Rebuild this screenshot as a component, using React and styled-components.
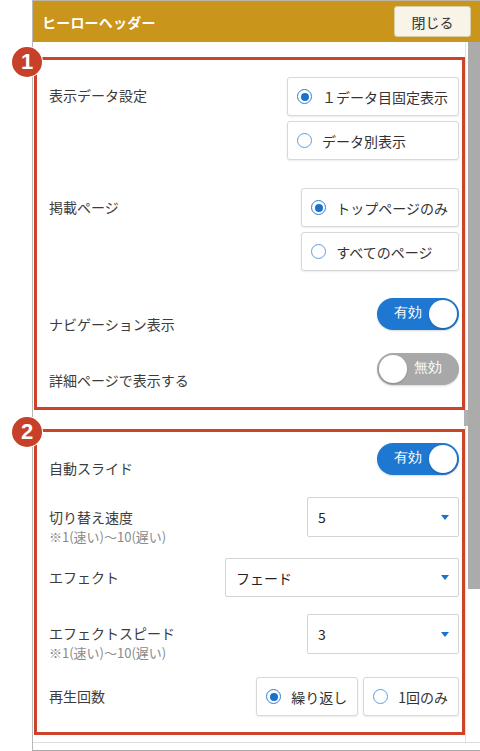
import React, { useState } from "react";
import styled, { createGlobalStyle } from "styled-components";

const GlobalStyle = createGlobalStyle`
  * { box-sizing: border-box; }
  html, body { margin: 0; padding: 0; background: #fff; }
  body {
    font-family: "Noto Sans CJK JP", "Noto Sans", sans-serif;
    color: #3a3a3a;
  }
`;

const Page = styled.div`
  width: 480px;
  height: 751px;
  display: flex;
  padding-left: 32px;
  overflow: hidden;
`;

const Panel = styled.div`
  flex: 1;
  display: flex;
  flex-direction: column;
  border-left: 1px solid #b8b8b8;
  border-bottom: 1px solid #a8a8a8;
`;

const Header = styled.div`
  height: 42px;
  flex-shrink: 0;
  display: flex;
  align-items: center;
  justify-content: space-between;
  padding: 0 9px 0 9px;
  background: #ca951b;
  border-top: 1px solid #bdb6a6;
`;

const Title = styled.div`
  color: #fff;
  font-size: 14px;
  font-weight: 700;
  letter-spacing: 0.2px;
`;

const CloseButton = styled.button`
  width: 77px;
  height: 31px;
  border: 1px solid #d9cfa8;
  border-radius: 3px;
  background: #f8f4e8;
  color: #333;
  font-family: inherit;
  font-size: 14px;
  cursor: pointer;
`;

const Body = styled.div`
  flex: 1;
  display: flex;
  min-height: 0;
`;

const Content = styled.div`
  flex: 1;
  display: flex;
  flex-direction: column;
  gap: 19px;
  padding: 15px 0 0 1px;
`;

const Scrollbar = styled.div`
  width: 15px;
  flex-shrink: 0;
  position: relative;
  border-left: 1px solid #e2e2e2;
  padding: 0 0 0 2px;

  &::before {
    content: "";
    position: absolute;
    left: -2px;
    top: 368px;
    width: 4px;
    height: 16px;
    background: #b0b0b0;
  }
`;

const Thumb = styled.div`
  height: 547px;
  background: #ababab;
`;

const Footer = styled.div`
  height: 8px;
  flex-shrink: 0;
  border-top: 1px solid #dedede;
`;

const Section = styled.div`
  position: relative;
  border: 3px solid #cc432a;
  padding: ${({ $pad }) => $pad};
  display: flex;
  flex-direction: column;
`;

const Badge = styled.div`
  position: absolute;
  left: -25px;
  top: ${({ $top }) => $top}px;
  width: 30px;
  height: 30px;
  border-radius: 50%;
  background: #c7402a;
  box-shadow: 0 0 0 1px #fff;
  color: #fff;
  font-family: "Liberation Sans", Arial, sans-serif;
  font-weight: 700;
  font-size: 22px;
  display: flex;
  align-items: center;
  justify-content: center;
`;

const Row = styled.div`
  display: flex;
  justify-content: space-between;
  align-items: flex-start;
  margin-top: ${({ $mt }) => $mt || 0}px;
`;

const Label = styled.div`
  padding-top: ${({ $pt }) => $pt}px;
  font-size: 14px;
  line-height: 20px;
  color: #3c3c3c;
`;

const Sub = styled.div`
  font-size: 13px;
  line-height: 20px;
  color: #8a8a8a;
`;

const OptionStack = styled.div`
  display: flex;
  flex-direction: ${({ $dir }) => $dir || "column"};
  gap: 5px;
`;

const Option = styled.label`
  height: 39px;
  display: flex;
  align-items: center;
  gap: 10px;
  padding: 0 10px 0 9px;
  border: 1px solid #d8d8d8;
  border-radius: 3px;
  box-shadow: 0 1px 2px rgba(0, 0, 0, 0.08);
  background: #fff;
  font-size: 14px;
  color: #333;
  cursor: pointer;
  white-space: nowrap;
`;

const Radio = styled.span`
  width: 15px;
  height: 15px;
  flex-shrink: 0;
  border-radius: 50%;
  border: 1.5px solid ${({ $on }) => ($on ? "#2c7fd6" : "#5c9ee2")};
  display: flex;
  align-items: center;
  justify-content: center;

  &::after {
    content: "";
    width: 8px;
    height: 8px;
    border-radius: 50%;
    background: ${({ $on }) => ($on ? "#1a72cf" : "transparent")};
  }
`;

const Toggle = styled.button`
  width: 82px;
  height: 32px;
  padding: 2px;
  border: none;
  border-radius: 16px;
  display: flex;
  flex-direction: ${({ $on }) => ($on ? "row" : "row-reverse")};
  align-items: center;
  background: ${({ $on }) => ($on ? "#1e77d1" : "#a8a8a8")};
  box-shadow: 0 1px 2px rgba(0, 0, 0, 0.15);
  cursor: pointer;
`;

const ToggleText = styled.span`
  flex: 1;
  text-align: center;
  color: #fff;
  font-family: inherit;
  font-size: 14px;
  font-weight: 500;
  padding: ${({ $on }) => ($on ? "0 0 0 8px" : "0 8px 0 0")};
  margin-top: -2px;
`;

const Knob = styled.span`
  width: 28px;
  height: 28px;
  border-radius: 50%;
  background: #fff;
  box-shadow: 0 1px 2px rgba(0, 0, 0, 0.2);
`;

const Select = styled.div`
  width: ${({ $w }) => $w}px;
  height: ${({ $h }) => $h || 40}px;
  display: flex;
  align-items: center;
  justify-content: space-between;
  padding: 0 9px 0 10px;
  border: 1px solid #d4d4d4;
  border-radius: 2px;
  background: #fff;
  font-size: 14px;
  color: #222;
`;

const Caret = styled.span`
  width: 0;
  height: 0;
  border-left: 4px solid transparent;
  border-right: 4px solid transparent;
  border-top: 5px solid #1a72cf;
`;

const RadioGroup = ({ options, value, onChange, dir }) => (
  <OptionStack $dir={dir}>
    {options.map((o) => (
      <Option key={o} onClick={() => onChange(o)}>
        <Radio $on={value === o} />
        {o}
      </Option>
    ))}
  </OptionStack>
);

const Switch = ({ on, onToggle }) => (
  <Toggle $on={on} onClick={onToggle}>
    <ToggleText $on={on}>{on ? "有効" : "無効"}</ToggleText>
    <Knob />
  </Toggle>
);

const App = () => {
  const [dataMode, setDataMode] = useState("１データ目固定表示");
  const [pageMode, setPageMode] = useState("トップページのみ");
  const [nav, setNav] = useState(true);
  const [detail, setDetail] = useState(false);
  const [auto, setAuto] = useState(true);
  const [repeat, setRepeat] = useState("繰り返し");

  return (
    <>
      <GlobalStyle />
      <Page>
        <Panel>
          <Header>
            <Title>ヒーローヘッダー</Title>
            <CloseButton>閉じる</CloseButton>
          </Header>
          <Body>
            <Content>
              <Section $pad="17px 3px 17px 12px">
                <Badge $top={-13}>1</Badge>
                <Row>
                  <Label $pt={8}>表示データ設定</Label>
                  <RadioGroup
                    options={["１データ目固定表示", "データ別表示"]}
                    value={dataMode}
                    onChange={setDataMode}
                  />
                </Row>
                <Row $mt={28}>
                  <Label $pt={9}>掲載ページ</Label>
                  <RadioGroup
                    options={["トップページのみ", "すべてのページ"]}
                    value={pageMode}
                    onChange={setPageMode}
                  />
                </Row>
                <Row $mt={27}>
                  <Label $pt={16}>ナビゲーション表示</Label>
                  <Switch on={nav} onToggle={() => setNav(!nav)} />
                </Row>
                <Row $mt={19}>
                  <Label $pt={17}>詳細ページで表示する</Label>
                  <Switch on={detail} onToggle={() => setDetail(!detail)} />
                </Row>
              </Section>

              <Section $pad="11px 3px 16px 12px">
                <Badge $top={-15}>2</Badge>
                <Row>
                  <Label $pt={15}>自動スライド</Label>
                  <Switch on={auto} onToggle={() => setAuto(!auto)} />
                </Row>
                <Row $mt={19}>
                  <Label $pt={10}>
                    切り替え速度
                    <Sub>※1(速い)〜10(遅い)</Sub>
                  </Label>
                  <Select $w={152}>
                    5
                    <Caret />
                  </Select>
                </Row>
                <Row $mt={11}>
                  <Label $pt={9}>エフェクト</Label>
                  <Select $w={234} $h={39}>
                    フェード
                    <Caret />
                  </Select>
                </Row>
                <Row $mt={17}>
                  <Label $pt={9}>
                    エフェクトスピード
                    <Sub>※1(速い)〜10(遅い)</Sub>
                  </Label>
                  <Select $w={152}>
                    3
                    <Caret />
                  </Select>
                </Row>
                <Row $mt={14}>
                  <Label $pt={9}>再生回数</Label>
                  <RadioGroup
                    dir="row"
                    options={["繰り返し", "1回のみ"]}
                    value={repeat}
                    onChange={setRepeat}
                  />
                </Row>
              </Section>
            </Content>
            <Scrollbar>
              <Thumb />
            </Scrollbar>
          </Body>
          <Footer />
        </Panel>
      </Page>
    </>
  );
};

export default App;
